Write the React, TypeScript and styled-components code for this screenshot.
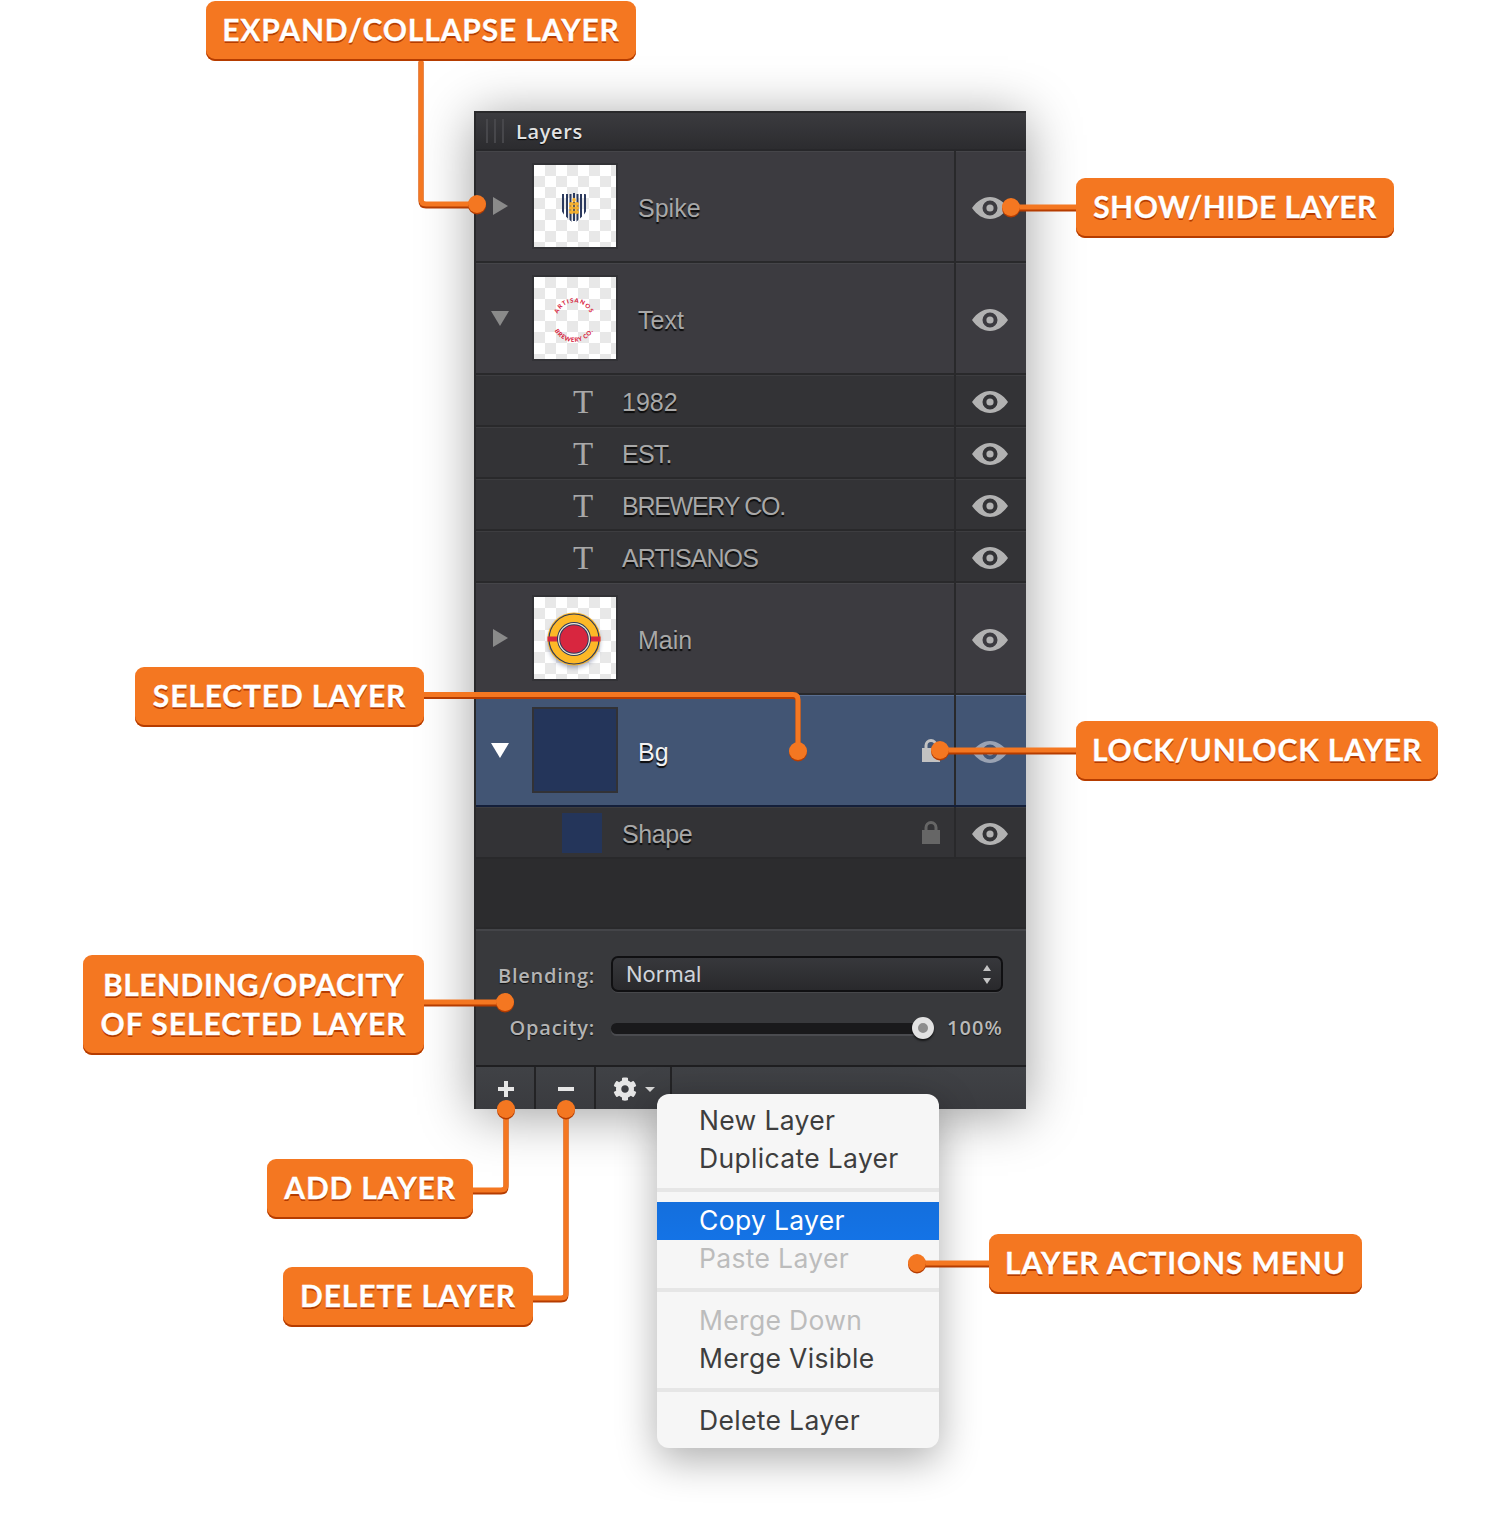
import React from "react";
import styled, { createGlobalStyle } from "styled-components";
import { FaCog } from "react-icons/fa";

const ORANGE = "#f47721";
const DARK_ORANGE = "#b53c00";

const Global = createGlobalStyle`
  html, body { margin: 0; padding: 0; background: #fff; }
`;

const Canvas = styled.div`
  position: relative;
  width: 1500px;
  height: 1518px;
  overflow: hidden;
  background: #fff;
`;

const Panel = styled.section`
  position: absolute;
  left: 474px;
  top: 111px;
  width: 552px;
  height: 998px;
  box-sizing: border-box;
  border-left: 2px solid #29292b;
  border-top: 2px solid #29292b;
  display: flex;
  flex-direction: column;
  background: #2c2c2e;
  box-shadow: 0 6px 50px rgba(0, 0, 0, 0.38);
`;

const Header = styled.header`
  height: 38px;
  box-sizing: border-box;
  display: flex;
  align-items: center;
  gap: 12px;
  padding-left: 10px;
  background: linear-gradient(#3b3b3f, #2c2c2f);
  border-bottom: 2px solid #27272a;
`;

const Grip = styled.div`
  width: 18px;
  height: 24px;
  background: repeating-linear-gradient(90deg, #47474b 0 2px, transparent 2px 8px);
`;

const Title = styled.h1`
  margin: 0;
  font: 600 20px "Open Sans", sans-serif;
  letter-spacing: 0.65px;
  color: #e2e2e2;
  text-shadow: 0 1px 1px #000;
`;

const Row = styled.div<{ $tall?: boolean; $selected?: boolean }>`
  height: ${(p) => (p.$tall ? 112 : 52)}px;
  box-sizing: border-box;
  display: flex;
  align-items: center;
  border-bottom: 2px solid ${(p) => (p.$selected ? "#141f3a" : "#29292b")};
  background: ${(p) => (p.$selected ? "#425574" : p.$tall ? "#3c3b40" : "#333336")};
  box-shadow: inset 0 1px 0 ${(p) => (p.$selected ? "#5a6f91" : "rgba(255,255,255,0.05)")};
`;

const Disclosure = styled.div`
  width: 48px;
  height: 20px;
  flex: none;
  display: flex;
  align-items: center;
  justify-content: center;
`;

const Arrow = styled.svg<{ $open?: boolean; $light?: boolean }>`
  width: 18px;
  height: 18px;
  fill: ${(p) => (p.$light ? "#ffffff" : "#8a8a8a")};
  transform: ${(p) => (p.$open ? "rotate(90deg)" : "none")};
`;

const Thumb = styled.div<{ $solid?: boolean }>`
  width: 86px;
  height: 86px;
  flex: none;
  box-sizing: border-box;
  margin-left: 8px;
  border: 2px solid #323236;
  background: ${(p) =>
    p.$solid ? "#24355a" : "repeating-conic-gradient(#e8e8e8 0 25%, #ffffff 0 50%) 0 0 / 22px 22px"};
`;

const ThumbArt = styled.svg`
  display: block;
  width: 82px;
  height: 82px;
`;

const TallLabel = styled.span<{ $selected?: boolean }>`
  flex: 1;
  margin: 5px 0 0 20px;
  font: 25px "Liberation Sans", Arial, sans-serif;
  color: ${(p) => (p.$selected ? "#f2f2f2" : "#a8a8a8")};
  text-shadow: 0 2px 1px #0b0b0b;
`;

const SubIcon = styled.div`
  width: 40px;
  flex: none;
  margin-left: 86px;
  display: flex;
  justify-content: center;
`;

const TypeGlyph = styled.span`
  font: 33px/40px "Liberation Serif", serif;
  color: #a8a8a8;
  padding-left: 2px;
  margin-top: 4px;
`;

const Swatch = styled.div`
  width: 40px;
  height: 40px;
  margin-top: 2px;
  background: #24355a;
`;

const SubLabel = styled.span<{ $tracking?: number }>`
  flex: 1;
  margin: 4px 0 0 20px;
  font: 25px "Liberation Sans", Arial, sans-serif;
  letter-spacing: ${(p) => p.$tracking ?? 0}px;
  color: #a8a8a8;
  text-shadow: 0 2px 1px #0b0b0b;
`;

const LockIcon = styled.svg<{ $light?: boolean }>`
  width: 18px;
  height: 24px;
  flex: none;
  margin-right: 14px;
  color: ${(p) => (p.$light ? "#c2c2c2" : "#666666")};
`;

const EyeCell = styled.div<{ $dim?: boolean }>`
  align-self: stretch;
  width: 72px;
  flex: none;
  box-sizing: border-box;
  padding-right: 2px;
  border-left: 2px solid #29292b;
  display: flex;
  align-items: center;
  justify-content: center;
  color: ${(p) => (p.$dim ? "#9aa3b3" : "#b2b2b2")};
`;

const EyeIcon = styled.svg`
  width: 36px;
  height: 22px;
  margin-top: 3px;
`;

const Empty = styled.div`
  height: 68px;
  background: #2c2c2e;
`;

const Blend = styled.div`
  height: 140px;
  box-sizing: border-box;
  padding: 27px 23px 0 0;
  display: grid;
  grid-template-columns: 119px 1fr;
  grid-auto-rows: min-content;
  column-gap: 16px;
  row-gap: 24px;
  align-items: center;
  background: #38393c;
  border-top: 2px solid #29292b;
  border-bottom: 2px solid #1f1f21;
  box-shadow: inset 0 2px 0 #444549;
`;

const FieldLabel = styled.label<{ $low?: boolean }>`
  text-align: right;
  padding-top: ${(p) => (p.$low ? 4 : 0)}px;
  font: 600 20px/24px "Open Sans", sans-serif;
  letter-spacing: 0.75px;
  color: #b4b4b4;
  text-shadow: 0 1px 1px #111;
`;

const SelectBox = styled.div`
  height: 36px;
  box-sizing: border-box;
  display: flex;
  align-items: center;
  justify-content: space-between;
  padding: 0 10px 0 13px;
  border: 2px solid #101012;
  border-radius: 7px;
  background: linear-gradient(#37383c, #29292c);
  box-shadow: 0 1px 0 rgba(255, 255, 255, 0.08);
`;

const SelectValue = styled.span`
  font: 22px Inter, sans-serif;
  color: #cfd3da;
`;

const Steppers = styled.div`
  display: flex;
  flex-direction: column;
  gap: 7px;
`;

const StepArrow = styled.div<{ $down?: boolean }>`
  width: 0;
  height: 0;
  border-left: 4px solid transparent;
  border-right: 4px solid transparent;
  ${(p) => (p.$down ? "border-top: 6px solid #c4c4c4;" : "border-bottom: 6px solid #c4c4c4;")}
`;

const SliderRow = styled.div`
  height: 24px;
  display: flex;
  align-items: center;
  gap: 13px;
`;

const Track = styled.div`
  position: relative;
  flex: 1;
  height: 11px;
  border-radius: 6px;
  background: #19191b;
  box-shadow: 0 2px 0 #4a4b4f;
`;

const Knob = styled.div`
  position: absolute;
  right: 0;
  top: -6px;
  width: 22px;
  height: 22px;
  box-sizing: border-box;
  border-radius: 50%;
  border: 6px solid #e2e2e2;
  background: #8d8d8d;
  box-shadow: 0 2px 2px rgba(0, 0, 0, 0.6);
`;

const Percent = styled.span`
  width: 56px;
  font: 600 20px/24px "Open Sans", sans-serif;
  letter-spacing: 1.1px;
  color: #b9b9b9;
  text-align: right;
  text-shadow: 0 1px 1px #111;
`;

const Toolbar = styled.div`
  flex: 1;
  display: flex;
  background: linear-gradient(#404246, #3a3b3f);
`;

const ToolButton = styled.button<{ $wide?: boolean }>`
  width: ${(p) => (p.$wide ? 76 : 60)}px;
  box-sizing: border-box;
  padding: 2px 0 0 2px;
  border: 0;
  border-right: 2px solid #232325;
  background: transparent;
  color: #e6e6e6;
  display: flex;
  align-items: center;
  justify-content: center;
  gap: 8px;
`;

const ToolSvg = styled.svg`
  width: 16px;
  height: 16px;
  fill: currentColor;
`;

const Caret = styled.div`
  width: 0;
  height: 0;
  border-left: 5px solid transparent;
  border-right: 5px solid transparent;
  border-top: 5px solid #d8d8d8;
`;

const Menu = styled.nav`
  position: absolute;
  left: 657px;
  top: 1094px;
  width: 282px;
  height: 354px;
  box-sizing: border-box;
  padding-top: 8px;
  border-radius: 12px;
  background: #f6f6f6;
  box-shadow: 0 12px 40px rgba(0, 0, 0, 0.32);
`;

const MenuItem = styled.div<{ $active?: boolean; $disabled?: boolean }>`
  height: 38px;
  box-sizing: border-box;
  padding: 0 0 2px 42px;
  display: flex;
  align-items: center;
  font: 26.5px Inter, sans-serif;
  letter-spacing: 0.33px;
  color: ${(p) => (p.$active ? "#ffffff" : p.$disabled ? "#bcbcbc" : "#3e3e3e")};
  background: ${(p) => (p.$active ? "linear-gradient(#146fdd, #1473e6)" : "transparent")};
`;

const MenuRule = styled.hr`
  height: 4px;
  margin: 10px 0;
  border: 0;
  background: #e6e6e6;
`;

const Wires = styled.svg`
  position: absolute;
  left: 0;
  top: 0;
  width: 1500px;
  height: 1518px;
  pointer-events: none;
`;

const Callout = styled.div<{ $x: number; $y: number; $w: number; $h?: number }>`
  position: absolute;
  left: ${(p) => p.$x}px;
  top: ${(p) => p.$y}px;
  width: ${(p) => p.$w}px;
  height: ${(p) => p.$h ?? 60}px;
  box-sizing: border-box;
  display: flex;
  flex-direction: column;
  align-items: center;
  justify-content: center;
  padding-bottom: 3px;
  text-align: center;
  white-space: pre;
  border-radius: 9px;
  background: ${ORANGE};
  box-shadow: inset 0 -2px 0 ${DARK_ORANGE};
  font: 700 30px/39px Lato, sans-serif;
  -webkit-text-stroke: 0.3px #ffffff;
  color: #ffffff;
  text-shadow: 0 2px 0 ${DARK_ORANGE};
`;

const CalloutLine = styled.span<{ $tracking?: number }>`
  letter-spacing: ${(p) => p.$tracking ?? 0.85}px;
`;

const Eye = () => (
  <EyeIcon viewBox="0 0 36 22">
    <path
      fill="currentColor"
      fillRule="evenodd"
      d="M0 11C5 4 11 0 18 0s13 4 18 11c-5 7-11 11-18 11S5 18 0 11ZM18 3.5a7.5 7.5 0 1 0 0 15 7.5 7.5 0 0 0 0-15Z"
    />
    <circle cx="18" cy="11" r="3.6" fill="currentColor" />
  </EyeIcon>
);

const Lock = ({ light }: { light?: boolean }) => (
  <LockIcon $light={light} viewBox="0 0 18 24">
    <path d="M4 11V7.5a5 5 0 0 1 10 0V11" fill="none" stroke="currentColor" strokeWidth="3" />
    <rect x="0" y="10" width="18" height="14" fill="currentColor" />
  </LockIcon>
);

const Tri = ({ open, light }: { open?: boolean; light?: boolean }) => (
  <Arrow $open={open} $light={light} viewBox="0 0 18 18">
    <path d="M2 0 17 9 2 18Z" />
  </Arrow>
);

const SpikeArt = () => (
  <ThumbArt viewBox="0 0 82 82">
    <defs>
      <clipPath id="shield">
        <path d="M28 29h23c1 0 2 1 2 2v11c0 7-8 12-13 17-5-5-13-10-13-17V30Z" />
      </clipPath>
    </defs>
    <g clipPath="url(#shield)" fill="#2c3a5e">
      <rect x="28" y="28" width="2" height="32" />
      <rect x="32" y="28" width="2" height="32" />
      <rect x="35.500" y="28" width="2" height="32" />
      <rect x="42.500" y="28" width="2" height="32" />
      <rect x="46" y="28" width="2" height="32" />
      <rect x="50" y="28" width="2" height="32" />
    </g>
    <rect x="39" y="28" width="2" height="28" fill="#2c3a5e" />
    <g fill="#f5b02e">
      <ellipse cx="40" cy="35" rx="1.800" ry="2.200" />
      <ellipse cx="37.500" cy="39" rx="2.600" ry="1.900" />
      <ellipse cx="42.500" cy="39" rx="2.600" ry="1.900" />
      <ellipse cx="37.500" cy="43" rx="2.600" ry="1.900" />
      <ellipse cx="42.500" cy="43" rx="2.600" ry="1.900" />
      <ellipse cx="37.500" cy="47" rx="2.600" ry="1.900" />
      <ellipse cx="42.500" cy="47" rx="2.600" ry="1.900" />
    </g>
  </ThumbArt>
);

const TextArt = () => (
  <ThumbArt viewBox="0 0 82 82">
    <defs>
      <path id="arcTop" d="M22.500 43a17.500 17.500 0 0 1 35 0" />
      <path id="arcBottom" d="M18 43a22 22 0 0 0 44 0" />
    </defs>
    <text fontFamily="Lato, sans-serif" fontWeight="900" fontSize="6" fill="#d8263f" letterSpacing="0.9">
      <textPath href="#arcTop" startOffset="50%" textAnchor="middle">ARTISANOS</textPath>
    </text>
    <text fontFamily="Lato, sans-serif" fontWeight="900" fontSize="6" fill="#d8263f" letterSpacing="0.6">
      <textPath href="#arcBottom" startOffset="50%" textAnchor="middle">BREWERY CO.</textPath>
    </text>
  </ThumbArt>
);

const MainArt = () => (
  <ThumbArt viewBox="0 0 82 82">
    <defs>
      <filter id="soft" x="-30%" y="-30%" width="160%" height="160%">
        <feGaussianBlur stdDeviation="2" />
      </filter>
    </defs>
    <circle cx="40" cy="45" r="26" fill="#4a5580" opacity="0.45" filter="url(#soft)" />
    <circle cx="40" cy="42" r="26.500" fill="#fdb827" />
    <circle cx="40" cy="42" r="25" fill="none" stroke="#2c3a5e" strokeWidth="1.200" />
    <rect x="13.500" y="39.500" width="53" height="5" fill="#d8263f" />
    <circle cx="40" cy="42" r="17" fill="#2c3a5e" />
    <circle cx="40" cy="42" r="16" fill="#f5ecd8" />
    <circle cx="40" cy="42" r="14.800" fill="#2c3a5e" />
    <circle cx="40" cy="42" r="13.800" fill="#d8263f" />
  </ThumbArt>
);

const wires: { d: string; dots: [number, number][] }[] = [
  { d: "M421 60V199q0 5 5 5H477", dots: [[477, 204]] },
  { d: "M1077 207H1011", dots: [[1011, 207]] },
  { d: "M424 694.500H793q5 0 5 5V751", dots: [[798, 751]] },
  { d: "M1077 750H940", dots: [[940, 750]] },
  { d: "M424 1002H505", dots: [[505, 1002]] },
  { d: "M506 1109V1185q0 5-5 5H472", dots: [[506, 1109]] },
  { d: "M566 1109V1293q0 5-5 5H532", dots: [[566, 1109]] },
  { d: "M989 1263H917", dots: [[917, 1263]] },
];

const textLayers = [
  { name: "1982", tracking: 0 },
  { name: "EST.", tracking: -0.75 },
  { name: "BREWERY CO.", tracking: -1.27 },
  { name: "ARTISANOS", tracking: -0.9 },
];

export default function App() {
  return (
    <Canvas>
      <Global />
      <Panel>
        <Header>
          <Grip />
          <Title>Layers</Title>
        </Header>

        <Row $tall>
          <Disclosure><Tri /></Disclosure>
          <Thumb><SpikeArt /></Thumb>
          <TallLabel>Spike</TallLabel>
          <EyeCell><Eye /></EyeCell>
        </Row>
        <Row $tall>
          <Disclosure><Tri open /></Disclosure>
          <Thumb><TextArt /></Thumb>
          <TallLabel>Text</TallLabel>
          <EyeCell><Eye /></EyeCell>
        </Row>
        {textLayers.map((layer) => (
          <Row key={layer.name}>
            <SubIcon><TypeGlyph>T</TypeGlyph></SubIcon>
            <SubLabel $tracking={layer.tracking}>{layer.name}</SubLabel>
            <EyeCell><Eye /></EyeCell>
          </Row>
        ))}
        <Row $tall>
          <Disclosure><Tri /></Disclosure>
          <Thumb><MainArt /></Thumb>
          <TallLabel>Main</TallLabel>
          <EyeCell><Eye /></EyeCell>
        </Row>
        <Row $tall $selected>
          <Disclosure><Tri open light /></Disclosure>
          <Thumb $solid />
          <TallLabel $selected>Bg</TallLabel>
          <Lock light />
          <EyeCell $dim><Eye /></EyeCell>
        </Row>
        <Row>
          <SubIcon><Swatch /></SubIcon>
          <SubLabel $tracking={-0.4}>Shape</SubLabel>
          <Lock />
          <EyeCell><Eye /></EyeCell>
        </Row>

        <Empty />

        <Blend>
          <FieldLabel $low>Blending:</FieldLabel>
          <SelectBox>
            <SelectValue>Normal</SelectValue>
            <Steppers>
              <StepArrow />
              <StepArrow $down />
            </Steppers>
          </SelectBox>
          <FieldLabel>Opacity:</FieldLabel>
          <SliderRow>
            <Track><Knob /></Track>
            <Percent>100%</Percent>
          </SliderRow>
        </Blend>

        <Toolbar>
          <ToolButton aria-label="Add layer">
            <ToolSvg viewBox="0 0 16 16"><path d="M6 0h4v6h6v4h-6v6H6v-6H0V6h6Z" /></ToolSvg>
          </ToolButton>
          <ToolButton aria-label="Delete layer">
            <ToolSvg viewBox="0 0 16 16"><rect x="0" y="6" width="16" height="4" /></ToolSvg>
          </ToolButton>
          <ToolButton $wide aria-label="Layer actions">
            <FaCog size={24} />
            <Caret />
          </ToolButton>
        </Toolbar>
      </Panel>

      <Menu>
        <MenuItem>New Layer</MenuItem>
        <MenuItem>Duplicate Layer</MenuItem>
        <MenuRule />
        <MenuItem $active>Copy Layer</MenuItem>
        <MenuItem $disabled>Paste Layer</MenuItem>
        <MenuRule />
        <MenuItem $disabled>Merge Down</MenuItem>
        <MenuItem>Merge Visible</MenuItem>
        <MenuRule />
        <MenuItem>Delete Layer</MenuItem>
      </Menu>

      <Wires viewBox="0 0 1500 1518">
        {wires.map((w) => (
          <g key={w.d}>
            <path d={w.d} transform="translate(0 2)" fill="none" stroke={DARK_ORANGE} strokeWidth="5" />
            <path d={w.d} fill="none" stroke={ORANGE} strokeWidth="5" />
            {w.dots.map(([x, y]) => (
              <g key={`${x}-${y}`}>
                <circle cx={x} cy={y + 1.500} r="9" fill={DARK_ORANGE} />
                <circle cx={x} cy={y} r="9" fill={ORANGE} />
              </g>
            ))}
          </g>
        ))}
      </Wires>

      <Callout $x={206} $y={1} $w={430}><CalloutLine>EXPAND/COLLAPSE LAYER</CalloutLine></Callout>
      <Callout $x={1076} $y={178} $w={318}><CalloutLine $tracking={0.45}>SHOW/HIDE LAYER</CalloutLine></Callout>
      <Callout $x={135} $y={667} $w={289}><CalloutLine>SELECTED LAYER</CalloutLine></Callout>
      <Callout $x={1076} $y={721} $w={362}><CalloutLine>LOCK/UNLOCK LAYER</CalloutLine></Callout>
      <Callout $x={83} $y={955} $w={341} $h={100}>
        <CalloutLine $tracking={0.45}>BLENDING/OPACITY</CalloutLine>
        <CalloutLine $tracking={1}>OF SELECTED LAYER</CalloutLine>
      </Callout>
      <Callout $x={267} $y={1159} $w={206}><CalloutLine>ADD LAYER</CalloutLine></Callout>
      <Callout $x={283} $y={1267} $w={250}><CalloutLine>DELETE LAYER</CalloutLine></Callout>
      <Callout $x={989} $y={1234} $w={373}><CalloutLine>LAYER ACTIONS MENU</CalloutLine></Callout>
    </Canvas>
  );
}
